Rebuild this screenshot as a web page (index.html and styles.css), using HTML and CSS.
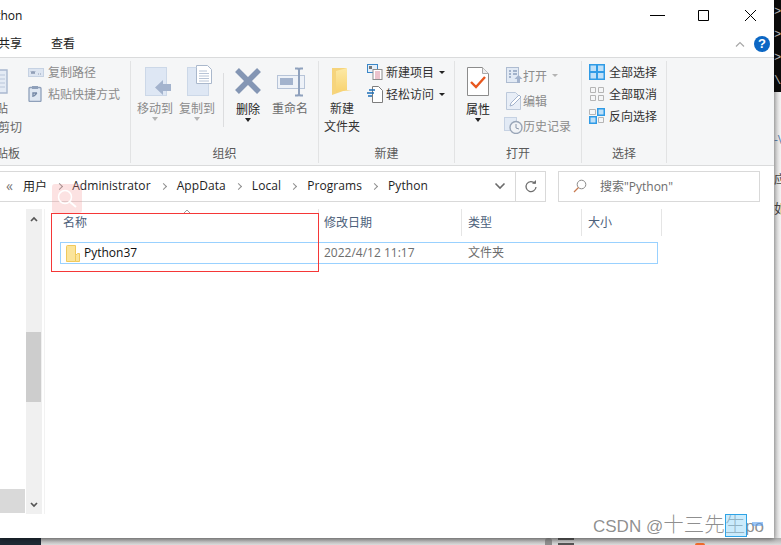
FILE: index.html
```html
<!DOCTYPE html>
<html lang="zh">
<head>
<meta charset="utf-8">
<title>Python</title>
<link rel="stylesheet" href="styles.css">
</head>
<body>
<div class="screen">
  <div class="upper">
    <main class="window">
      <header class="titlebar">
        <span class="title">Python</span>
        <div class="winctl">
          <svg class="ctl" width="46" height="30" viewBox="0 0 46 30"><path d="M15 15.5h15" stroke="#000"/></svg>
          <svg class="ctl" width="46" height="30" viewBox="0 0 46 30"><path d="M17.5 10.5h10v10h-10z" fill="none" stroke="#000"/></svg>
          <svg class="ctl" width="46" height="30" viewBox="0 0 46 30"><path d="M18 10l11 11M29 10l-11 11" stroke="#000"/></svg>
        </div>
      </header>
      <nav class="tabs">
        <span class="tab tab-first">共享</span>
        <span class="tab">查看</span>
        <span class="tabs-fill"></span>
        <svg class="collapse" width="10" height="6" viewBox="0 0 10 6"><path d="M1 5.5l4-4 4 4" fill="none" stroke="#a8a8a8" stroke-width="1.2"/></svg>
        <span class="help">?</span>
      </nav>

      <section class="ribbon">
        <div class="group g1">
          <div class="group-body">
            <div class="clip-col">
              <svg class="paste-icon" width="8" height="26" viewBox="0 0 8 26"><path d="M-6 2h13v23H-6z" fill="#e4ebf5" stroke="#a9b8cf" stroke-width="1.4"/><path d="M0 7h5M0 11h5M0 15h5M0 19h5" stroke="#b9c6da"/></svg>
              <span class="clip-paste">粘贴</span>
              <span class="clip-cut">剪切</span>
            </div>
            <div class="smalls">
              <div class="small off"><svg class="ic" width="16" height="16" viewBox="0 0 16 16"><rect x="0.5" y="4.5" width="15" height="8" fill="#dde5f1" stroke="#c6d2e3"/><path d="M3 7l1 3 1-3 1 3 1-3M10 10h1M12 10h1" fill="none" stroke="#7d8da8" stroke-width=".8"/></svg>复制路径</div>
              <div class="small off"><svg class="ic" width="16" height="16" viewBox="0 0 16 16"><rect x="1" y="1.5" width="12" height="14" rx="1" fill="#dfe7f2" stroke="#8fa0ba" stroke-width="1.3"/><rect x="4" y="0" width="6" height="3" fill="#8fa0ba"/><path d="M5 11V7h4M9 7l-3 3" fill="none" stroke="#7588a6" stroke-width="1.4"/></svg>粘贴快捷方式</div>
            </div>
          </div>
          <div class="group-label g1-label">剪贴板</div>
        </div>

        <div class="group g2">
          <div class="group-body">
            <div class="big off">
              <svg class="bigic" width="32" height="32" viewBox="0 0 32 32"><rect x="6.5" y="2.5" width="21" height="28" fill="#dee7f4" stroke="#ccd8e8"/><path d="M16 22.500l8-7.500v4h8v7h-8v4z" fill="#a3b3cd"/></svg>
              <span>移动到</span><i class="caret caret-off"></i>
            </div>
            <div class="big off">
              <svg class="bigic" width="32" height="32" viewBox="0 0 32 32"><rect x="6.500" y="2.500" width="21" height="28" fill="#dee7f4" stroke="#ccd8e8"/><path d="M15.500 2.500V.5h11l4 4v14h-15z" fill="#fff" stroke="#aab8cc"/><path d="M18 6h8M18 8.500h10M18 11h10M18 13.500h10M18 16h10" stroke="#b8c4d6"/></svg>
              <span>复制到</span><i class="caret caret-off"></i>
            </div>
            <i class="vsep"></i>
            <div class="big lower">
              <svg class="bigic" width="32" height="32" viewBox="0 0 32 32"><path d="M5 5l22 22M27 5L5 27" stroke="#8496b4" stroke-width="5.500"/></svg>
              <span>删除</span><i class="caret"></i>
            </div>
            <div class="big grey">
              <svg class="bigic" width="32" height="32" viewBox="0 0 32 32"><rect x="3.500" y="10.500" width="27" height="13" fill="#eef2f8" stroke="#b7c4d8"/><rect x="6" y="13" width="13" height="7" fill="#a3b3cd"/><path d="M21 3.500h3l1 1.500 1-1.500h3M25 5v24M21 30.500h3l1-1.500 1 1.500h3" fill="none" stroke="#8fa1bd" stroke-width="2"/></svg>
              <span>重命名</span>
            </div>
          </div>
          <div class="group-label">组织</div>
        </div>

        <div class="group g3">
          <div class="group-body">
            <div class="big new">
              <svg class="bigic" width="32" height="32" viewBox="0 0 32 32"><defs><linearGradient id="fy" x1="0" y1="0" x2="0" y2="1"><stop offset="0" stop-color="#fce9a6"/><stop offset="1" stop-color="#f8d26e"/></linearGradient></defs><path d="M6 3h14v22l-14 5z" fill="#f6d47c"/><path d="M10 6l11-3v22l5 .500-14 .500-2 2z" fill="url(#fy)"/></svg>
              <span>新建</span><span>文件夹</span>
            </div>
            <div class="smalls s3">
              <div class="small"><svg class="ic" width="16" height="16" viewBox="0 0 16 16"><rect x=".5" y=".5" width="10" height="8" fill="#e6eff8" stroke="#3a87c8"/><rect x="2" y="2" width="3" height="3" fill="#777"/><rect x="6" y="5.500" width="9" height="10" fill="#fff" stroke="#8d8d8d"/><path d="M8 8h5M8 10h5M8 12h5M8 14h5" stroke="#d8879a"/></svg>新建项目<i class="caret side-caret"></i></div>
              <div class="small"><svg class="ic" width="16" height="18" viewBox="0 0 16 18"><path d="M5.500 1.500h6l4 4v12h-10z" fill="#fff" stroke="#7d7d7d"/><path d="M0 8h7M2 5h6M1 11h4" stroke="#1d6fb8" stroke-width="1.300"/></svg>轻松访问<i class="caret side-caret"></i></div>
            </div>
          </div>
          <div class="group-label">新建</div>
        </div>

        <div class="group g4">
          <div class="group-body">
            <div class="big prop lower">
              <svg class="bigic" width="32" height="32" viewBox="0 0 32 32"><path d="M5.500 2.500h15l6 6v22h-21z" fill="#fff" stroke="#8c8c8c"/><path d="M20.500 2.500v6h6" fill="#eee" stroke="#aaa"/><path d="M9 17l5 5 9-10" fill="none" stroke="#e8571e" stroke-width="2.400"/></svg>
              <span>属性</span><i class="caret"></i>
            </div>
            <div class="smalls s4">
              <div class="small off"><svg class="ic" width="17" height="17" viewBox="0 0 17 17"><rect x=".5" y=".5" width="12" height="15" fill="#e2eaf5" stroke="#aebcd1"/><path d="M3 4h2M3 7h2M3 10h2M7 4h4M7 7h4" stroke="#8fa1bd" stroke-width="1.500"/><path d="M11 16v-4H8.500l4-4 4 4H14v4z" fill="#a3b3cd"/></svg>打开<i class="caret side-caret caret-off"></i></div>
              <div class="small off"><svg class="ic" width="17" height="18" viewBox="0 0 17 18"><path d="M.5 .5h9l5 5v12H.5z" fill="#e8eef7" stroke="#bcc9db"/><path d="M4 14l1-3 8-8 2 2-8 8z" fill="#fff" stroke="#a3b3cd"/></svg>编辑</div>
              <div class="small off"><svg class="ic hist" width="19" height="17" viewBox="0 0 19 17"><rect x=".5" y=".5" width="12" height="13" fill="#e2eaf5" stroke="#c6d2e3"/><circle cx="12" cy="10.500" r="6" fill="#f1f3f6" stroke="#9aa6b8" stroke-width="1.400"/><path d="M12 7v4l3 1" fill="none" stroke="#8a97ab"/></svg>历史记录</div>
            </div>
          </div>
          <div class="group-label">打开</div>
        </div>

        <div class="group g5">
          <div class="group-body">
            <div class="smalls">
              <div class="small sel"><svg class="ic" width="16" height="16" viewBox="0 0 16 16"><rect width="16" height="16" fill="#2f9be6"/><path d="M1.500 1.500h5.500v5.500H1.500zM9 1.500h5.500v5.500H9zM1.500 9h5.500v5.500H1.500zM9 9h5.500v5.500H9z" fill="#bfe0f8"/></svg>全部选择</div>
              <div class="small sel"><svg class="ic" width="16" height="16" viewBox="0 0 16 16"><path d="M1.500 1.500h5v5h-5zM9.500 1.500h5v5h-5zM1.500 9.500h5v5h-5zM9.500 9.500h5v5h-5z" fill="none" stroke="#b5b5b5"/></svg>全部取消</div>
              <div class="small sel"><svg class="ic" width="16" height="16" viewBox="0 0 16 16"><rect x="8" width="8" height="8" fill="#2f9be6"/><rect x="9.500" y="1.500" width="5" height="5" fill="#bfe0f8"/><rect y="8" width="8" height="8" fill="#2f9be6"/><rect x="1.500" y="9.500" width="5" height="5" fill="#bfe0f8"/><path d="M.5 1.500h6v5h-6zM9.500 9.500h5v5h-5z" fill="none" stroke="#b5b5b5"/></svg>反向选择</div>
            </div>
          </div>
          <div class="group-label">选择</div>
        </div>
      </section>

      <div class="addr-row">
        <div class="addr">
          <span class="more">«</span>
          <span>用户</span><i class="chev chev-first"></i>
          <span>Administrator</span><i class="chev"></i>
          <span>AppData</span><i class="chev"></i>
          <span>Local</span><i class="chev"></i>
          <span>Programs</span><i class="chev"></i>
          <span>Python</span>
          <span class="addr-fill"></span>
          <svg class="addr-down" width="12" height="8" viewBox="0 0 12 8"><path d="M1.500 1.500L6 6l4.500-4.500" fill="none" stroke="#6b6b6b" stroke-width="1.600"/></svg>
        </div>
        <div class="refresh">
          <svg width="14" height="14" viewBox="0 0 14 14"><path d="M10.800 3.300A5 5 0 1 0 12 7" fill="none" stroke="#6e6e6e" stroke-width="1.300"/><path d="M8 3.800h4V0z" fill="#6e6e6e"/></svg>
        </div>
        <div class="search">
          <svg width="14" height="14" viewBox="0 0 14 14"><circle cx="8.500" cy="5.500" r="4.300" fill="none" stroke="#8a8a8a"/><path d="M5.500 8.500L1 13" stroke="#c97a4f" stroke-width="1.200"/></svg>
          <span>搜索"Python"</span>
        </div>
      </div>

      <div class="main">
        <aside class="nav">
          <div class="nav-list"><div class="nav-item"></div></div>
          <div class="scroll">
            <svg class="sb-up" width="8" height="6" viewBox="0 0 8 6"><path d="M1 5l3-3 3 3" fill="none" stroke="#555" stroke-width="1.700"/></svg>
            <div class="thumb"></div>
            <svg class="sb-down" width="8" height="6" viewBox="0 0 8 6"><path d="M1 1l3 3 3-3" fill="none" stroke="#555" stroke-width="1.700"/></svg>
          </div>
        </aside>
        <div class="list">
          <div class="cols">
            <div class="col c-name">名称<svg class="sort" width="8" height="5" viewBox="0 0 8 5"><path d="M.5 4.500L4 1l3.500 3.500" fill="none" stroke="#9a9a9a"/></svg></div>
            <div class="col c-date">修改日期</div>
            <div class="col c-type">类型</div>
            <div class="col c-size">大小</div>
          </div>
          <div class="row">
            <div class="r-name">
              <svg width="14" height="17" viewBox="0 0 14 17"><path d="M.5 1.500a1 1 0 0 1 1-1h8v16h-9z" fill="#fbe49a" stroke="#f0c95c"/><path d="M9.500 16.500h4v-8h-2l-2 2z" fill="#fbe49a" stroke="#f0c95c"/></svg>
              <span>Python37</span>
            </div>
            <div class="r-date">2022/4/12 11:17</div>
            <div class="r-type">文件夹</div>
          </div>
        </div>
      </div>
    </main>

    <aside class="side">
      <div class="term">&gt;I<br>&gt;<br>&gt;\<br>\A</div>
      <div class="side-text">
        <span class="side-v">-V</span>
        <span class="side-a">应</span>
        <span class="side-b">如</span>
      </div>
    </aside>
  </div>

  <footer class="strip">
    <i class="strip-dark"></i>
    <i class="strip-blob"></i>
    <i class="strip-lines"></i>
    <i class="strip-orange"></i>
  </footer>

  <div class="annot-red"></div>
  <div class="annot-pink">
    <svg width="30" height="29" viewBox="0 0 30 29"><circle cx="13" cy="13" r="6.500" fill="none" stroke="#fff" stroke-width="1.500"/><path d="M18 18l6 5" stroke="#fff" stroke-width="2"/></svg>
  </div>
  <div class="watermark">CSDN @<span class="wm-cjk">十三先生</span>po</div>
  <div class="annot-blue"></div>
  <div class="annot-mini"></div>
</div>
</body>
</html>
```

FILE: styles.css
```css
* { box-sizing: border-box; }
html, body { margin: 0; padding: 0; background: #fff; }
body {
  font-family: "Open Sans", "Noto Sans CJK SC", sans-serif;
  font-size: 12px;
  color: #1e1e1e;
}
i { display: block; font-style: normal; }
svg { display: block; flex: none; }

.screen {
  position: relative;
  width: 781px;
  height: 545px;
  overflow: hidden;
  display: flex;
  flex-direction: column;
}
.upper { display: flex; height: 538px; }
.window {
  position: relative;
  z-index: 1;
  width: 774px;
  height: 538px;
  background: #fff;
  box-shadow: 0 1px 5px rgba(0,0,0,.45);
  overflow: hidden;
  display: flex;
  flex-direction: column;
}

/* title */
.titlebar { display: flex; height: 30px; align-items: flex-start; }
.title { margin-left: -17px; line-height: 31px; color: #111; font-size: 12px; }
.winctl { margin-left: auto; display: flex; margin-right: 1px; }

/* tabs */
.tabs { display: flex; align-items: center; height: 27px; padding-right: 4px; }
.tab { line-height: 27px; color: #222; }
.tab-first { margin-left: -2px; margin-right: 29px; }
.tabs-fill { flex: 1; }
.collapse { margin-right: 9px; }
.help {
  width: 16px; height: 16px; border-radius: 50%;
  background: #0c67c4; color: #fff; font-weight: 700; font-size: 13px;
  line-height: 16px; text-align: center;
  font-family: "Liberation Sans", sans-serif;
}

/* ribbon */
.ribbon {
  display: flex;
  height: 109px;
  background: #f5f6f7;
  border-top: 1px solid #dadbdc;
  border-bottom: 1px solid #dadbdc;
  padding-top: 3px;
  padding-bottom: 3px;
}
.group {
  display: flex;
  flex-direction: column;
  border-right: 1px solid #e2e3e4;
  height: 102px;
}
.group-body { display: flex; height: 84px; overflow: hidden; }
.group-label {
  text-align: center;
  line-height: 18px;
  color: #5a5a5a;
}
.g1 { width: 131px; overflow: hidden; }
.g2 { width: 188px; }
.g3 { width: 136px; }
.g4 { width: 127px; }
.g5 { width: 85px; border-right: 1px solid #e2e3e4; }
.g1-label { text-align: left; margin-left: -16px; color: #5a5a5a; }
.g2 .group-body { padding-left: 3px; }
.g3 .group-body { padding-left: 5px; }
.g5 .group-body { padding-left: 7px; }

.clip-col { width: 28px; position: relative; flex: none; color: #666; display: flex; flex-direction: column; }
.paste-icon { margin-top: 7px; }
.clip-paste { margin: 6px 0 0 -16px; line-height: 18px; }
.clip-cut { margin: 1px 0 0 -2px; line-height: 18px; }

.big {
  width: 42px;
  flex: none;
  display: flex;
  flex-direction: column;
  align-items: center;
  padding-top: 4px;
  line-height: 18px;
  color: #222;
}
.bigic { margin-bottom: 3px; }
.lower .bigic { margin-bottom: 4px; }
.off { color: #8b8b8b; }
.grey { color: #6b6b6b; }
.new { width: 36px; white-space: nowrap; }
.new span { color: #333; }
.prop { width: 46px; }
.vsep { width: 1px; height: 54px; margin: 12px 3px 0 5px; background: #dcdddf; }

.caret {
  width: 0; height: 0;
  border-left: 3.500px solid transparent;
  border-right: 3.500px solid transparent;
  border-top: 4px solid #222;
  margin-top: -1px;
}
.caret-off { border-top-color: #b4b4b4; }
.caret.side-caret {
  margin: 0 0 0 5px;
  align-self: center;
  border-left-width: 3px;
  border-right-width: 3px;
  border-top-width: 3px;
}

.smalls { display: flex; flex-direction: column; }
.small {
  display: flex;
  align-items: center;
  height: 22px;
  white-space: nowrap;
  color: #333;
}
.small.off { color: #8b8b8b; }
.ic { margin-right: 4px; }
.s3 { margin-left: 7px; }
.s3 .ic { margin-right: 3px; }
.s4 { margin-left: 5px; padding-top: 2px; }
.s4 .small { height: 25px; }
.s4 .ic { margin-right: 0; }
.s4 .hist { margin-left: -2px; }
.sel .ic { margin-right: 4px; }

/* address */
.addr-row { display: flex; height: 31px; margin-top: 5px; flex: none; }
.addr {
  width: 517px;
  margin-left: -1px;
  display: flex;
  align-items: center;
  border: 1px solid #d9d9d9;
  padding: 0 0 2px 6px;
  color: #1e1e1e;
  letter-spacing: .08px;
}
.more { color: #777; width: 17px; font-size: 14px; line-height: 18px; }
.chev {
  width: 26px; height: 7px;
  position: relative;
  flex: none;
}
.chev-first { width: 25px; }
.chev::after {
  content: "";
  display: block;
  width: 4px; height: 4px;
  margin: 2px 0 0 10px;
  border-top: 1.500px solid #8f8f8f;
  border-right: 1.500px solid #8f8f8f;
  transform: rotate(45deg);
}
.addr-fill { flex: 1; }
.addr-down { margin-right: 9px; }
.refresh {
  width: 31px;
  margin-left: -1px;
  border: 1px solid #d9d9d9;
  display: flex;
  align-items: center;
  justify-content: center;
}
.search {
  width: 202px;
  margin-left: 12px;
  border: 1px solid #d9d9d9;
  display: flex;
  align-items: center;
  gap: 13px;
  padding: 0 0 1px 14px;
  color: #6d6d6d;
}

/* main */
.main { display: flex; flex: 1; padding-top: 7px; min-height: 0; }
.nav {
  width: 45px;
  height: 305px;
  flex: none;
  display: flex;
  border-right: 1px solid #f2f2f2;
}
.nav-list { width: 26px; display: flex; flex-direction: column; justify-content: flex-end; padding-bottom: 1px; }
.nav-item { width: 25px; height: 24px; background: #d9d9d9; }
.scroll {
  width: 16px;
  background: #f0f0f0;
  display: flex;
  flex-direction: column;
  align-items: center;
}
.sb-up { margin-top: 7px; }
.thumb { width: 15px; height: 70px; margin: 110px 1px 0 0; background: #cdcdcd; }
.sb-down { margin-top: auto; margin-bottom: 6px; }

.list { flex: 1; }
.cols { display: flex; height: 27px; }
.col {
  border-right: 1px solid #e5e5e5;
  color: #4c607a;
  line-height: 28px;
  padding-left: 6px;
  position: relative;
}
.c-name { width: 274px; padding-left: 18px; }
.c-date { width: 143px; padding-left: 5px; }
.c-type { width: 120px; }
.c-size { width: 80px; }
.sort { position: absolute; left: 138px; top: 0; }

.row {
  display: flex;
  align-items: center;
  width: 598px;
  height: 22px;
  margin: 6px 0 0 15px;
  border: 1px solid #99d1ff;
}
.r-name { width: 258px; display: flex; align-items: center; gap: 4px; padding-left: 5px; color: #111; }
.r-name span, .r-date, .r-type { line-height: 18px; padding-bottom: 1px; }
.r-date { width: 149px; padding-left: 5px; color: #6d6d6d; }
.r-type { color: #6d6d6d; }

/* right strip */
.side {
  width: 7px;
  overflow: hidden;
  display: flex;
  flex-direction: column;
  background: linear-gradient(90deg, #d0d0d0, #f4f4f4);
}
.term {
  height: 92px;
  flex: none;
  background: #0c0c0c;
  color: #bbb;
  font-size: 12px;
  line-height: 23px;
  padding-top: 1px;
  white-space: nowrap;
  font-family: "Liberation Mono", monospace;
}
.side-text { position: relative; flex: 1; }
.side-v, .side-a, .side-b { position: absolute; left: 0; white-space: nowrap; }
.side-v { top: 39px; color: #5b7fa8; }
.side-a { top: 78px; color: #444; }
.side-b { top: 106px; color: #444; font-size: 13px; }

/* bottom strip */
.strip {
  position: relative;
  height: 7px;
  flex: none;
  display: flex;
  background: linear-gradient(#ababab, #dcdcdc);
}
.strip-dark { width: 41px; background: #1f2a35; }
.strip-blob { width: 7px; margin-left: 504px; background: #8f8f8f; border-radius: 3px 3px 0 0; }
.strip-lines {
  width: 16px;
  margin-left: 6px;
  background: linear-gradient(#555 0 2px, transparent 2px 5px, #555 5px);
}
.strip-orange { width: 10px; height: 2px; margin: 5px 0 0 121px; background: #ef6c2c; border-radius: 3px 3px 0 0; }

/* overlays */
.annot-red {
  position: absolute; z-index: 2;
  left: 51px; top: 213px; width: 268px; height: 59px;
  border: 1px solid #f53737;
}
.annot-pink {
  position: absolute; z-index: 2;
  left: 52px; top: 184px; width: 30px; height: 29px;
  background: rgba(245, 150, 150, .28);
  border-radius: 3px;
}
.watermark {
  position: absolute; z-index: 3;
  left: 593px; top: 513px;
  font-size: 17px;
  line-height: 24px;
  font-family: "Liberation Sans", "Noto Sans CJK SC", sans-serif;
  color: rgba(100, 100, 100, .72);
  white-space: nowrap;
}
.wm-cjk { font-size: 20.500px; line-height: 24px; font-weight: 300; }
.annot-blue {
  position: absolute; z-index: 3;
  left: 725px; top: 514px; width: 22px; height: 23px;
  border: 1px solid #2ea3e6;
  background: rgba(150, 215, 250, .5);
}
.annot-mini {
  position: absolute; z-index: 3;
  left: 752px; top: 522px; width: 11px; height: 4px;
  background: rgba(90, 160, 240, .6);
}
```
